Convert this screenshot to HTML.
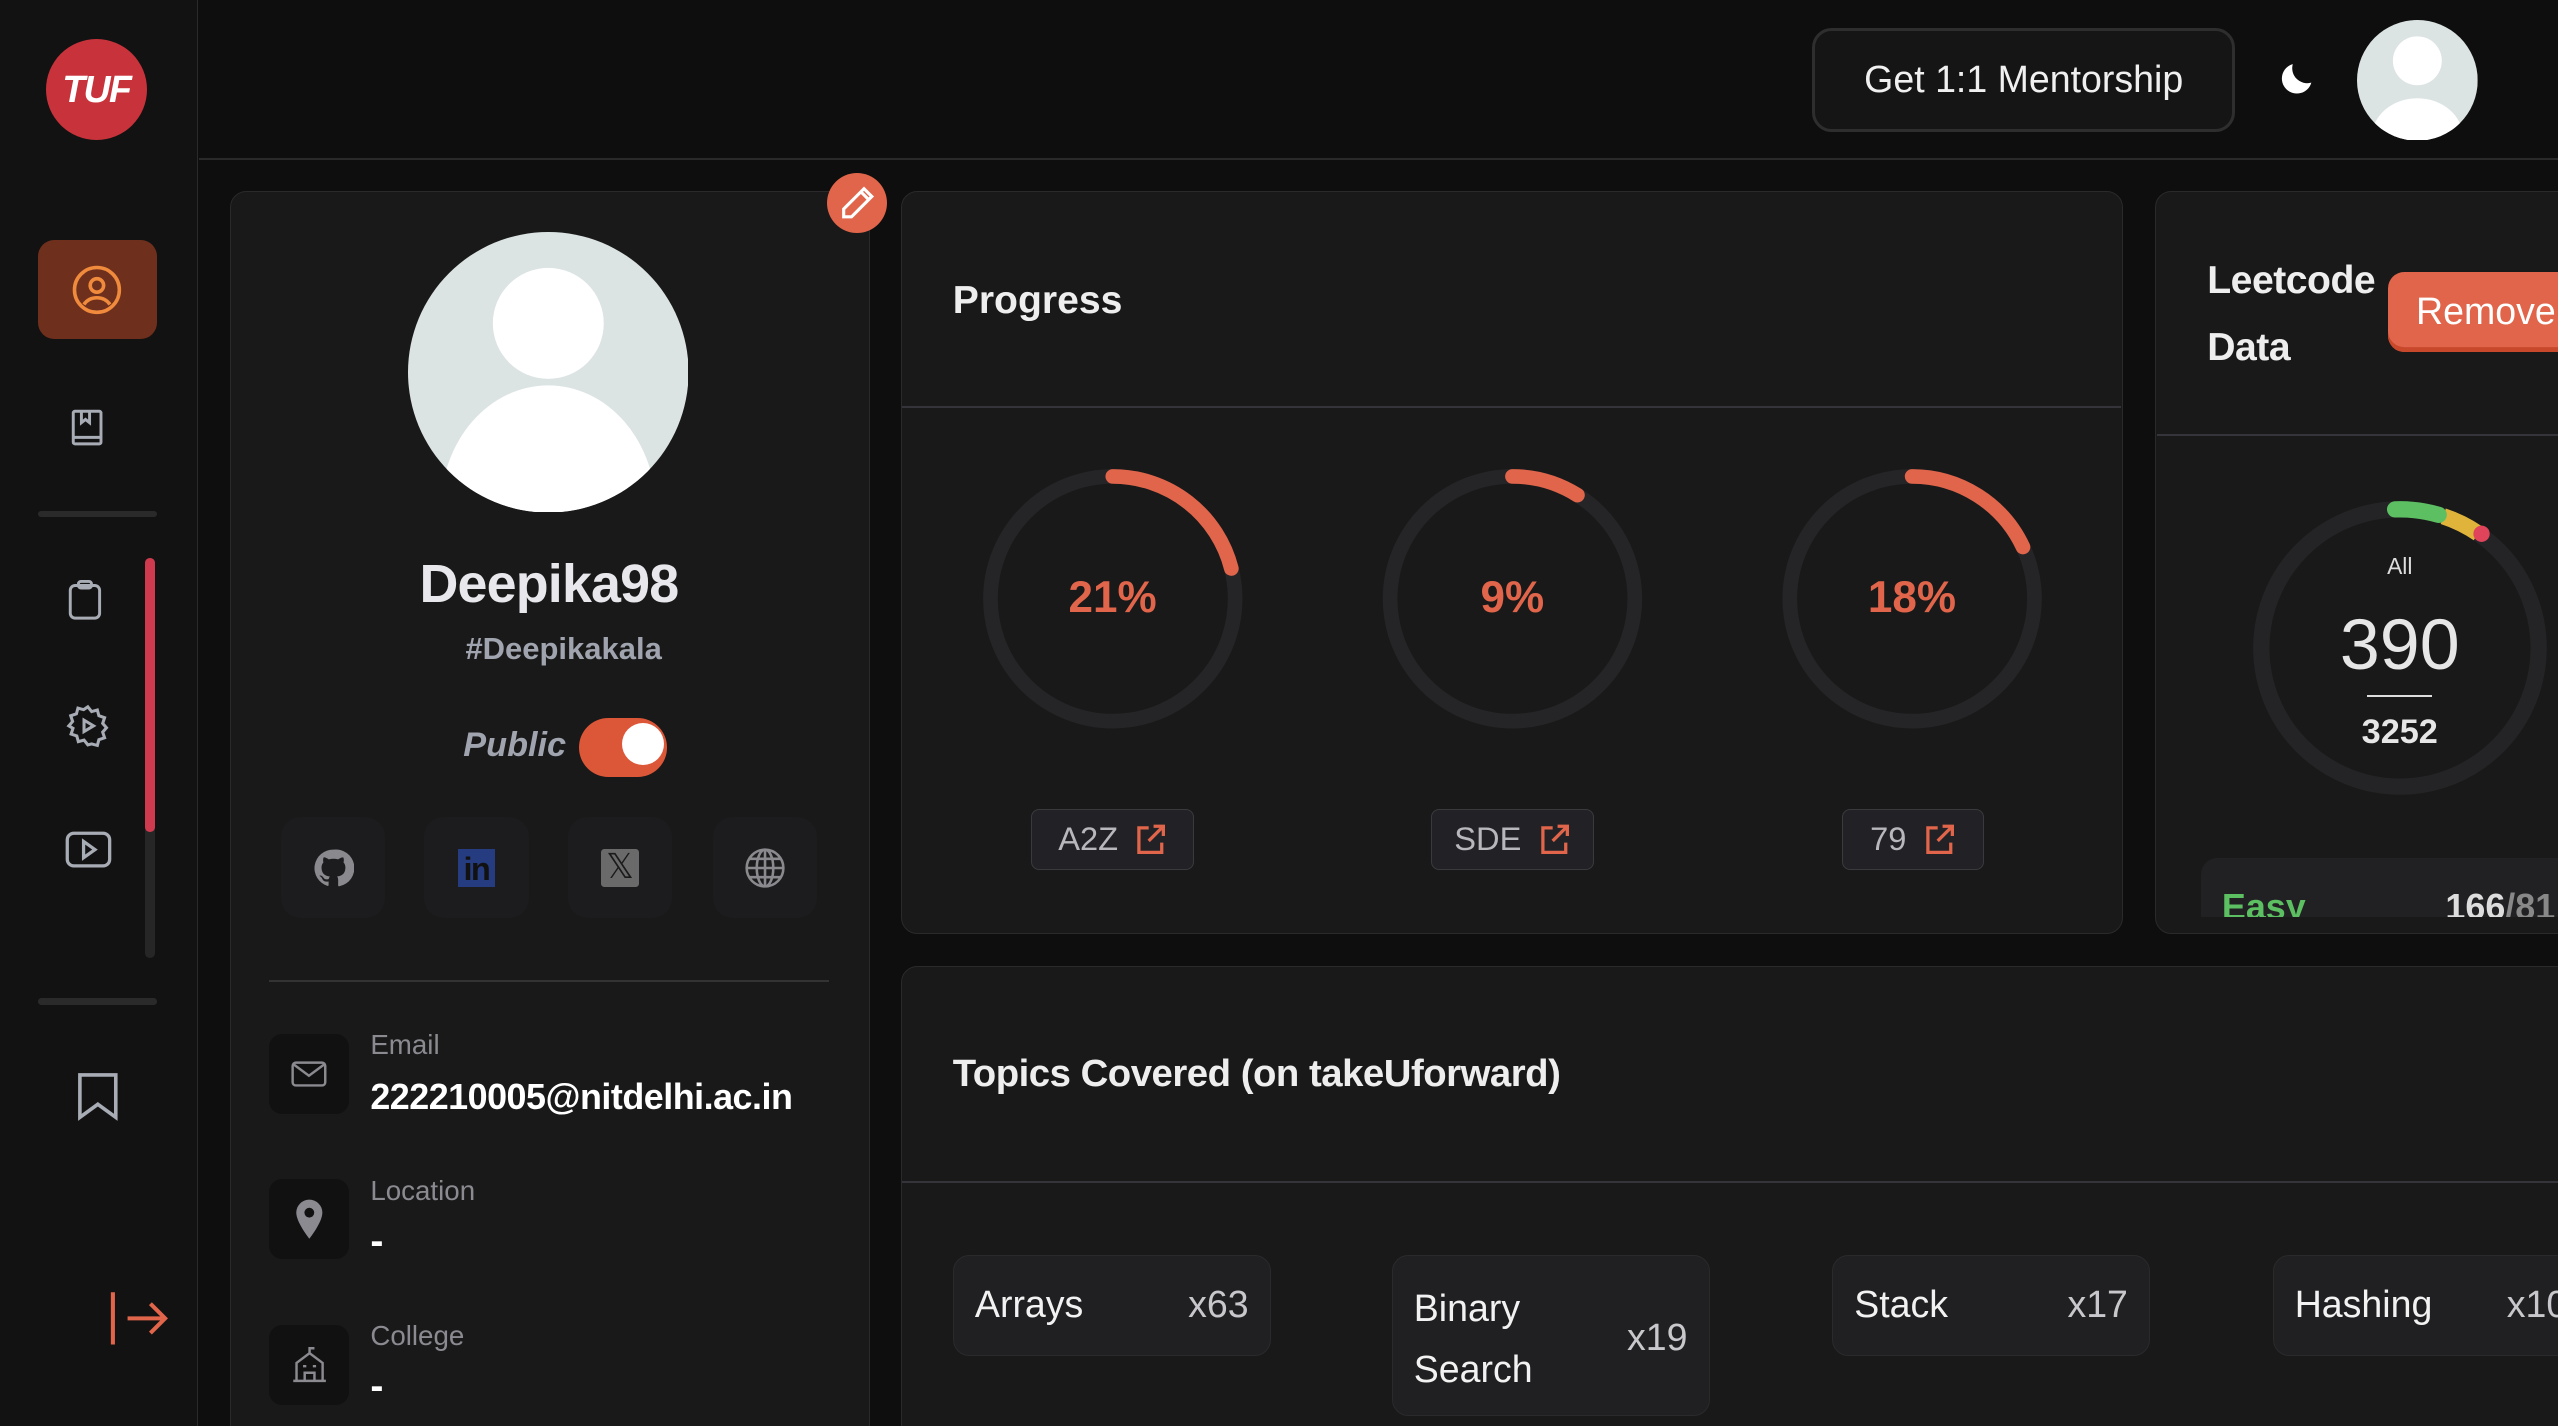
<!DOCTYPE html>
<html><head><meta charset="utf-8"><style>
html,body{margin:0;padding:0;background:#0e0e0e;overflow:hidden;width:2558px;height:1426px}
#root{zoom:1.63138;position:relative;width:1568px;height:874px;overflow:hidden;font-family:"Liberation Sans",sans-serif;color:#e6e6ea}
.a{position:absolute}
.card{position:absolute;background:#191919;border:1px solid #2a2a2a;border-radius:10px;overflow:hidden}
.hr{position:absolute;height:1px;background:#34343a}
.b{font-weight:bold}
.pill{position:absolute;top:496px;height:37px;background:#222226;border:1px solid #3a3a3e;border-radius:5px;color:#b8b8bc;font-size:20px;display:flex;align-items:center;justify-content:center;gap:10px;box-sizing:border-box}
.chip{position:absolute;top:769px;height:62px;width:195px;background:#202022;border:1px solid #2a2a2c;border-radius:10px;box-sizing:border-box;font-size:23px;color:#f2f2f2}
.chip .n{position:absolute;left:13px;top:17px}
.chip .c{position:absolute;right:13px;top:17px;color:#c8c8cc}
.soc{position:absolute;top:501px;width:64px;height:62px;background:#1c1c1e;border-radius:12px;display:flex;align-items:center;justify-content:center}
.ib{position:absolute;left:165px;width:49px;height:49px;background:#111;border-radius:8px;display:flex;align-items:center;justify-content:center}
.lbl{position:absolute;left:227px;font-size:17px;color:#8a8a90}
.val{position:absolute;left:227px;font-size:24px;color:#fff;font-weight:bold}
</style></head><body><div id="root">
<div class="a" style="left:0;top:0;width:121px;height:874px;background:#121212;border-right:1px solid #2a2a2a"></div>
<div class="a" style="left:122px;top:97px;width:1446px;height:1px;background:#2a2a2a"></div>
<div class="a" style="left:28px;top:24px;width:62px;height:62px;border-radius:50%;background:#c8333b;color:#fff;font-weight:bold;font-style:italic;font-size:23px;display:flex;align-items:center;justify-content:center;letter-spacing:-1px">TUF</div>
<div class="a" style="left:23px;top:147px;width:73px;height:61px;background:#6e2f1c;border-radius:10px"></div>
<svg class="a" style="left:43px;top:161px" width="33" height="33" viewBox="0 0 24 24" fill="none" stroke="#f08a3c" stroke-width="1.6"><circle cx="12" cy="12" r="10"/><circle cx="12" cy="10" r="3"/><path d="M6.2 18.5c1.5-2.2 3.5-3 5.8-3s4.3.8 5.8 3"/></svg>
<svg class="a" style="left:43px;top:250px" width="22" height="24" viewBox="0 0 22 24" fill="none" stroke="#a8acb4" stroke-width="1.8"><rect x="2" y="2" width="17" height="20" rx="1"/><path d="M2 18h17M7 2v7l2.5-2 2.5 2V2"/></svg>
<div class="a" style="left:23px;top:313px;width:73px;height:4px;background:#2a2a2a;border-radius:2px"></div>
<div class="a" style="left:89px;top:342px;width:6px;height:245px;background:#262626;border-radius:3px"></div>
<div class="a" style="left:89px;top:342px;width:6px;height:168px;background:#d03a4e;border-radius:3px"></div>
<svg class="a" style="left:41px;top:355px" width="22" height="26" viewBox="0 0 22 26" fill="none" stroke="#a8acb4" stroke-width="1.8"><rect x="2" y="4" width="18" height="20" rx="3"/><rect x="7" y="1.5" width="8" height="4" rx="1.5"/></svg>
<svg class="a" style="left:40px;top:431px" width="28" height="28" viewBox="0 0 24 24" fill="none" stroke="#a8acb4" stroke-width="1.6"><path d="M12 2l2 2.5 3-.8.8 3 3 1-1 3 2 2.3-2 2.3 1 3-3 1-.8 3-3-.8L12 22l-2-2.5-3 .8-.8-3-3-1 1-3L2 12l2-2.3-1-3 3-1 .8-3 3 .8z"/><path d="M10 9v6l5-3z"/></svg>
<svg class="a" style="left:39px;top:509px" width="30" height="24" viewBox="0 0 30 24" fill="none" stroke="#a8acb4" stroke-width="2"><rect x="2" y="2" width="26" height="20" rx="4"/><path d="M12 7v10l7-5z"/></svg>
<div class="a" style="left:23px;top:612px;width:73px;height:4px;background:#2a2a2a;border-radius:2px"></div>
<svg class="a" style="left:46px;top:656px" width="28" height="32" viewBox="0 0 28 32" fill="none" stroke="#a8acb4" stroke-width="2.2"><path d="M3 3h22v26l-11-8-11 8z"/></svg>
<svg class="a" style="left:66px;top:790px" width="38" height="36" viewBox="0 0 38 36" fill="none" stroke="#e0654a" stroke-width="2.5"><path d="M3 2v32M12 18h23M26 9l9 9-9 9"/></svg>
<div class="a" style="left:1111px;top:17px;width:259px;height:64px;box-sizing:border-box;border:2px solid #2e2e2e;background:#151515;border-radius:12px;font-size:23px;color:#f0f0f0;display:flex;align-items:center;justify-content:center">Get 1:1 Mentorship</div>
<svg class="a" style="left:1395px;top:35px" width="26" height="26" viewBox="0 0 24 24"><path d="M20 14.5A8.5 8.5 0 0 1 9.5 4a8.5 8.5 0 1 0 10.5 10.5z" fill="#fff"/></svg>
<svg class="a" style="left:1445px;top:12px" width="74" height="74" viewBox="0 0 74 74"><clipPath id="c1"><circle cx="37" cy="37" r="37"/></clipPath><g clip-path="url(#c1)"><rect width="74" height="74" fill="#dbe3e3"/><circle cx="37" cy="25" r="15" fill="#fff"/><ellipse cx="37" cy="72" rx="28" ry="24" fill="#fff"/></g></svg>
<div class="card" style="left:141px;top:117px;width:391px;height:770px"></div>
<div class="a" style="left:507px;top:106px;width:37px;height:37px;border-radius:50%;background:#e0654a"></div>
<svg class="a" style="left:514px;top:113px" width="23" height="23" viewBox="0 0 24 24" fill="none" stroke="#fff" stroke-width="2"><path d="M16 3l5 5L8 21H3v-5z M14 5l5 5"/></svg>
<svg class="a" style="left:250px;top:142px" width="172" height="172" viewBox="0 0 172 172"><clipPath id="c2"><circle cx="86" cy="86" r="86"/></clipPath><g clip-path="url(#c2)"><rect width="172" height="172" fill="#dbe3e3"/><circle cx="86" cy="56" r="34" fill="#fff"/><ellipse cx="86" cy="170" rx="66" ry="76" fill="#fff"/></g></svg>
<div class="a b" style="left:141px;width:391px;top:339px;text-align:center;font-size:33px;color:#e8e8ec;letter-spacing:-0.5px">Deepika98</div>
<div class="a b" style="left:150px;width:391px;top:387px;text-align:center;font-size:19px;color:#a0a4ae">#Deepikakala</div>
<div class="a b" style="left:284px;top:445px;font-size:21px;font-style:italic;color:#a0a4ae">Public</div>
<div class="a" style="left:355px;top:440px;width:54px;height:36px;border-radius:18px;background:#dc5638"></div>
<div class="a" style="left:381px;top:443px;width:26px;height:26px;border-radius:50%;background:#fff"></div>
<div class="soc" style="left:172px"><svg width="26" height="26" viewBox="0 0 24 24" fill="#8a8a8e"><path d="M12 1.5A10.5 10.5 0 0 0 8.7 22c.5.1.7-.2.7-.5v-2c-2.9.6-3.5-1.3-3.5-1.3-.5-1.2-1.2-1.5-1.2-1.5-1-.7.1-.6.1-.6 1 .1 1.6 1.1 1.6 1.1.9 1.6 2.5 1.1 3.100.9.1-.7.4-1.100.7-1.400-2.300-.3-4.800-1.200-4.800-5.200 0-1.100.4-2.100 1.100-2.800-.1-.3-.5-1.300.1-2.800 0 0 .9-.3 2.900 1.100a10 10 0 0 1 5.300 0c2-1.400 2.900-1.100 2.900-1.100.6 1.500.2 2.500.1 2.800.7.7 1.100 1.700 1.100 2.800 0 4-2.500 4.900-4.800 5.200.4.3.7 1 .7 2v3c0 .3.2.6.7.5A10.5 10.5 0 0 0 12 1.5z"/></svg></div>
<div class="soc" style="left:260px"><div style="width:23px;height:23px;background:#263c80;color:#111;font-weight:bold;font-size:20px;line-height:24px;text-align:center;letter-spacing:-1px">in</div></div>
<div class="soc" style="left:348px"><div style="width:23px;height:23px;background:#6a6a6a;border-radius:2px;color:#1a1a1a;font-size:21px;line-height:23px;text-align:center">𝕏</div></div>
<div class="soc" style="left:437px"><svg width="27" height="27" viewBox="0 0 24 24" fill="none" stroke="#8a8a8e" stroke-width="1.4"><circle cx="12" cy="12" r="10"/><ellipse cx="12" cy="12" rx="4.5" ry="10"/><path d="M2 12h20M3.5 7h17M3.5 17h17M12 2v20"/></svg></div>
<div class="hr" style="left:165px;top:601px;width:343px;background:#333"></div>
<div class="ib" style="top:634px"><svg width="22" height="16" viewBox="0 0 22 16" fill="none" stroke="#8a8a90" stroke-width="1.5"><rect x="1" y="1" width="20" height="14" rx="2"/><path d="M1.5 2l9.5 7 9.5-7"/></svg></div>
<div class="lbl" style="top:631px">Email</div><div class="val" style="top:660px;font-size:22px;letter-spacing:-0.3px">222210005@nitdelhi.ac.in</div>
<div class="ib" style="top:723px"><svg width="20" height="26" viewBox="0 0 20 26"><path d="M10 1a8 8 0 0 0-8 8c0 6 8 16 8 16s8-10 8-16a8 8 0 0 0-8-8z" fill="#8a8a90"/><circle cx="10" cy="9" r="3" fill="#111"/></svg></div>
<div class="lbl" style="top:720px">Location</div><div class="val" style="top:748px">-</div>
<div class="ib" style="top:812px"><svg width="24" height="24" viewBox="0 0 24 24" fill="none" stroke="#8a8a90" stroke-width="1.5"><path d="M2 22h20M4 22V11l8-6 8 6v11M9 22v-5h6v5M12 5V2h3M8 13h2M14 13h2"/></svg></div>
<div class="lbl" style="top:809px">College</div><div class="val" style="top:837px">-</div>
<div class="card" style="left:552px;top:117px;width:748px;height:454px"></div>
<div class="a b" style="left:584px;top:171px;font-size:24px;color:#eee">Progress</div>
<div class="hr" style="left:553px;top:249px;width:747px"></div>
<svg class="a" style="left:600px;top:285px" width="660" height="164" viewBox="0 0 660 164" fill="none">
<g stroke="#252527" stroke-width="9"><circle cx="82" cy="82" r="75"/><circle cx="327" cy="82" r="75"/><circle cx="572" cy="82" r="75"/></g>
<g stroke="#e0654a" stroke-width="9" stroke-linecap="round">
<circle cx="82" cy="82" r="75" stroke-dasharray="99 500" transform="rotate(-90 82 82)"/>
<circle cx="327" cy="82" r="75" stroke-dasharray="42 500" transform="rotate(-90 327 82)"/>
<circle cx="572" cy="82" r="75" stroke-dasharray="85 500" transform="rotate(-90 572 82)"/></g></svg>
<div class="a b" style="left:632px;width:100px;top:351px;text-align:center;font-size:27px;color:#e0654a">21%</div>
<div class="a b" style="left:877px;width:100px;top:351px;text-align:center;font-size:27px;color:#e0654a">9%</div>
<div class="a b" style="left:1122px;width:100px;top:351px;text-align:center;font-size:27px;color:#e0654a">18%</div>
<div class="pill" style="left:632px;width:100px">A2Z<svg width="20" height="20" viewBox="0 0 20 20" fill="none" stroke="#e0654a" stroke-width="2"><path d="M9 3H3v15h14v-6M12 2h6v6M18 2L9 11"/></svg></div>
<div class="pill" style="left:877px;width:100px">SDE<svg width="20" height="20" viewBox="0 0 20 20" fill="none" stroke="#e0654a" stroke-width="2"><path d="M9 3H3v15h14v-6M12 2h6v6M18 2L9 11"/></svg></div>
<div class="pill" style="left:1129px;width:87px">79<svg width="20" height="20" viewBox="0 0 20 20" fill="none" stroke="#e0654a" stroke-width="2"><path d="M9 3H3v15h14v-6M12 2h6v6M18 2L9 11"/></svg></div>
<div class="card" style="left:1321px;top:117px;width:300px;height:454px"></div>
<div class="a b" style="left:1353px;top:152px;font-size:24px;line-height:41px;color:#eee;letter-spacing:-0.3px">Leetcode<br>Data</div>
<div class="a" style="left:1464px;top:167px;width:140px;height:49px;background:#e0654a;border-radius:10px;box-shadow:inset 0 -3px 0 #c8482c;color:#fff;font-size:23px;line-height:48px;padding-left:17px;box-sizing:border-box">Remove</div>
<div class="hr" style="left:1322px;top:266px;width:260px"></div>
<svg class="a" style="left:1376px;top:302px" width="190" height="190" viewBox="0 0 190 190" fill="none">
<circle cx="95" cy="95" r="85" stroke="#242426" stroke-width="10"/>
<circle cx="95" cy="95" r="85" stroke="#e0b43a" stroke-width="10" stroke-dasharray="0 27 24 500" transform="rotate(-90 95 95)"/>
<circle cx="95" cy="95" r="85" stroke="#5cbf62" stroke-width="10" stroke-linecap="round" stroke-dasharray="27 600" transform="rotate(-92 95 95)"/>
<circle cx="145" cy="25" r="5" fill="#e0445a"/></svg>
<div class="a" style="left:1421px;width:100px;top:339px;text-align:center;font-size:14px;color:#ddd">All</div>
<div class="a" style="left:1401px;width:140px;top:370px;text-align:center;font-size:44px;color:#e6e6e6">390</div>
<div class="a" style="left:1451px;top:426px;width:40px;height:1px;background:#ddd"></div>
<div class="a b" style="left:1421px;width:100px;top:437px;text-align:center;font-size:21px;color:#e6e6e6">3252</div>
<div class="a" style="left:1349px;top:526px;width:230px;height:36px;overflow:hidden;background:#212123;border-radius:10px 10px 0 0">
<div class="a b" style="left:13px;top:18px;font-size:22px;color:#5cbf62">Easy</div>
<div class="a b" style="left:150px;top:18px;font-size:22px;color:#ddd">166<span style="color:#888">/81</span></div></div>
<div class="card" style="left:552px;top:592px;width:1100px;height:300px"></div>
<div class="a b" style="left:584px;top:645px;font-size:23.5px;color:#eee;letter-spacing:-0.3px">Topics Covered (on takeUforward)</div>
<div class="hr" style="left:553px;top:724px;width:1020px"></div>
<div class="chip" style="left:584px"><span class="n">Arrays</span><span class="c">x63</span></div>
<div class="chip" style="left:853px;height:99px"><span class="n" style="line-height:37px;top:14px">Binary<br>Search</span><span class="c" style="top:37px">x19</span></div>
<div class="chip" style="left:1123px"><span class="n">Stack</span><span class="c">x17</span></div>
<div class="chip" style="left:1393px"><span class="n">Hashing</span><span class="c" style="right:auto;left:143px">x10</span></div>
</div></body></html>
